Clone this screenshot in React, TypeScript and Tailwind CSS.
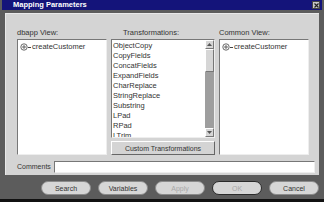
import React from "react";

const transforms = [
  "ObjectCopy",
  "CopyFields",
  "ConcatFields",
  "ExpandFields",
  "CharReplace",
  "StringReplace",
  "Substring",
  "LPad",
  "RPad",
  "LTrim",
];

function TreeNode({ label }: { label: string }) {
  return (
    <div className="flex items-center h-[10px] pl-[1px]">
      <svg width="8" height="8" viewBox="0 0 8 8" className="shrink-0">
        <circle cx="4" cy="4" r="3.2" fill="white" stroke="#444" strokeWidth="0.8" />
        <path d="M2 4 H6 M4 2 V6" stroke="#444" strokeWidth="0.8" />
      </svg>
      <div className="w-[3px] h-px bg-[#444]" />
      <span className="ml-[1px]">{label}</span>
    </div>
  );
}

function ScrollArrow({ up }: { up?: boolean }) {
  return (
    <div className="h-[9px] w-[9px] bg-[#d6d6d6] border border-t-white border-l-white border-b-[#777] border-r-[#777] flex items-center justify-center">
      <svg width="5" height="3" viewBox="0 0 5 3">
        <path d={up ? "M0 3 L2.5 0 L5 3 Z" : "M0 0 L2.5 3 L5 0 Z"} fill="#555" />
      </svg>
    </div>
  );
}

function DlgButton({ label, disabled, focus }: { label: string; disabled?: boolean; focus?: boolean }) {
  return (
    <button
      className={`w-[50px] h-[14px] rounded-full bg-[#d6d6d6] text-[7px] leading-none ${
        focus ? "border border-[#2a2a2a]" : "border border-[#8a8a8a]"
      } ${disabled ? "text-[#a8a8a8]" : "text-[#333]"}`}
    >
      {label}
    </button>
  );
}

export default function App() {
  return (
    <div
      className="w-[324px] h-[202px] bg-[#5c5c5c] flex flex-col overflow-hidden text-[#333]"
      style={{ fontFamily: '"Liberation Sans", Arial, sans-serif' }}
    >
      {/* title bar */}
      <div className="h-[10px] mx-[2px] bg-[#14147a] flex items-center justify-between pl-[11px] pr-[2px]">
        <span className="text-white font-bold text-[7.5px] leading-none">Mapping Parameters</span>
        <div className="w-[8px] h-[8px] bg-[#c8c8c8] border border-[#444] flex items-center justify-center">
          <svg width="5" height="5" viewBox="0 0 5 5">
            <path d="M0.5 0.5 L4.5 4.5 M4.5 0.5 L0.5 4.5" stroke="#222" strokeWidth="1.2" />
          </svg>
        </div>
      </div>

      {/* main panel */}
      <div className="mt-[3px] mx-[5px] h-[162px] bg-[#d4d4d4] border-t border-l border-[#e8e8e8] flex flex-col text-[7.5px]">
        <div className="flex pl-[11px] pt-[14px] gap-[4px]">
          {/* left column */}
          <div className="w-[90px] flex flex-col">
            <div className="h-[10px] leading-[10px]">dbapp View:</div>
            <div className="mt-[1px] h-[116px] bg-white border border-t-[#777] border-l-[#777] border-b-[#eee] border-r-[#eee] pt-[2px] pl-[1px]">
              <TreeNode label="createCustomer" />
            </div>
          </div>

          {/* middle column */}
          <div className="w-[104px] flex flex-col">
            <div className="h-[10px] leading-[10px] pl-[12px]">Transformations:</div>
            <div className="mt-[1px] h-[99px] bg-white border border-t-[#777] border-l-[#777] border-b-[#eee] border-r-[#eee] flex overflow-hidden">
              <div className="flex-1 flex flex-col pl-[1px] pt-[1px] overflow-hidden">
                {transforms.map((t) => (
                  <div key={t} className="h-[10px] leading-[10px] shrink-0">
                    {t}
                  </div>
                ))}
              </div>
              <div className="w-[9px] flex flex-col bg-[#9e9e9e]">
                <ScrollArrow up />
                <div className="h-[23px] bg-[#d6d6d6] border border-t-white border-l-white border-b-[#777] border-r-[#777]" />
                <div className="flex-1" />
                <ScrollArrow />
              </div>
            </div>
            <button className="mt-[3px] h-[14px] bg-[#d4d4d4] border border-t-white border-l-white border-b-[#666] border-r-[#666] text-[7px] leading-none text-[#333]">
              Custom Transformations
            </button>
          </div>

          {/* right column */}
          <div className="w-[90px] flex flex-col">
            <div className="h-[10px] leading-[10px]">Common View:</div>
            <div className="mt-[1px] h-[116px] bg-white border border-t-[#777] border-l-[#777] border-b-[#eee] border-r-[#eee] pt-[2px] pl-[1px]">
              <TreeNode label="createCustomer" />
            </div>
          </div>
        </div>

        {/* comments */}
        <div className="flex items-center mt-[6px] pl-[11px]">
          <span className="w-[37px] text-[7px]">Comments</span>
          <div className="w-[261px] h-[12px] bg-white border border-t-[#777] border-l-[#777] border-b-[#eee] border-r-[#eee]" />
        </div>
      </div>

      {/* buttons */}
      <div className="mt-[6px] flex justify-end gap-[7px] pr-[5px]">
        <DlgButton label="Search" />
        <DlgButton label="Variables" />
        <DlgButton label="Apply" disabled />
        <DlgButton label="OK" disabled focus />
        <DlgButton label="Cancel" />
      </div>

      <div className="mt-auto h-[3px] bg-[#111]" />
    </div>
  );
}
